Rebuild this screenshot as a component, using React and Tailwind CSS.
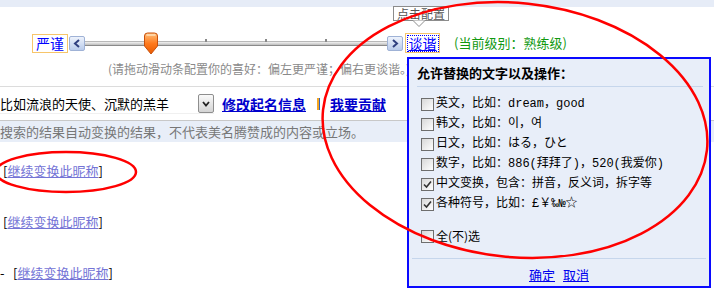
import React from "react";

const cjk = { fontFamily: '"Noto Sans CJK SC", "Noto Sans", sans-serif' };
const mono = { fontFamily: '"Liberation Mono", "Noto Sans CJK SC", monospace' };

function ArrowButton({ dir }) {
  return (
    <div className="w-[16px] h-[15px] border border-[#9fb2d6] rounded-[2px] bg-gradient-to-b from-[#eef3fc] to-[#b9cbeb] flex items-center justify-center">
      <svg width="8" height="9" viewBox="0 0 8 9">
        {dir === "left" ? (
          <path d="M6 1 L2 4.5 L6 8" fill="none" stroke="#2f3f7f" strokeWidth="2" />
        ) : (
          <path d="M2 1 L6 4.5 L2 8" fill="none" stroke="#2f3f7f" strokeWidth="2" />
        )}
      </svg>
    </div>
  );
}

function Thumb() {
  return (
    <svg width="16" height="23" viewBox="0 0 16 23">
      <defs>
        <linearGradient id="tg" x1="0" y1="0" x2="0" y2="1">
          <stop offset="0" stopColor="#ffc07a" />
          <stop offset="0.5" stopColor="#ff7a1e" />
          <stop offset="1" stopColor="#e85a00" />
        </linearGradient>
      </defs>
      <path
        d="M1.5 4 Q1.5 1 4.5 1 H11.5 Q14.5 1 14.5 4 V14 L8 22 L1.5 14 Z"
        fill="url(#tg)"
        stroke="#c9500c"
        strokeWidth="1"
      />
      <path d="M4 3 H12" stroke="#ffe0b8" strokeWidth="1.5" strokeLinecap="round" />
    </svg>
  );
}

function Checkbox({ checked }) {
  return (
    <div className="w-[13px] h-[13px] border border-[#6e6e6e] bg-gradient-to-br from-[#d8d8d8] to-[#ffffff] flex items-center justify-center shrink-0">
      {checked && (
        <svg width="9" height="9" viewBox="0 0 9 9">
          <path d="M1 4.5 L3.5 7 L8 1.5" fill="none" stroke="#333" strokeWidth="1.6" />
        </svg>
      )}
    </div>
  );
}

const items = [
  { text: "英文，比如：dream，good", checked: false },
  { text: "韩文，比如：이，여", checked: false },
  { text: "日文，比如：はる，ひと", checked: false },
  { text: "数字，比如：886(拜拜了)，520(我爱你)", checked: false },
  { text: "中文变换，包含：拼音，反义词，拆字等", checked: true },
  { text: "各种符号，比如：£￥‰№☆", checked: true },
];

function LinkLine({ dash }) {
  return (
    <div className="h-[20px] flex items-center text-[13px] text-black" style={cjk}>
      {dash && <span className="w-[10px]">-</span>}
      <span className="ml-[3px]">[</span>
      <span className="text-[#7474d6] underline">继续变换此昵称</span>
      <span>]</span>
    </div>
  );
}

export default function App() {
  return (
    <div className="relative w-[714px] h-[292px] overflow-hidden bg-white" style={cjk}>
      <div className="h-[7px] bg-[#e6ecf7]" />

      {/* slider row */}
      <div className="flex items-center mt-[26px] pl-[32px] h-[20px]">
        <div className="w-[36px] h-[19px] border border-[#f7c56a] bg-white text-[14px] leading-[17px] text-[#0000ff] flex items-center justify-center">
          严谨
        </div>
        <div className="ml-[1px]">
          <ArrowButton dir="left" />
        </div>
        <div className="relative w-[302px] h-[20px] flex items-center">
          <div className="w-full h-[5px] border-t border-[#b8b8b8] border-b border-b-[#8a8a8a] bg-gradient-to-b from-[#f2f2f2] to-[#bdbdbd]" />
          <div className="absolute left-[120px] top-[6px] w-[2px] h-[3px] bg-[#888]" />
          <div className="absolute left-[180px] top-[6px] w-[2px] h-[3px] bg-[#888]" />
          <div className="absolute left-[240px] top-[6px] w-[2px] h-[3px] bg-[#888]" />
          <div className="absolute left-[58px] top-[-1px]">
            <Thumb />
          </div>
        </div>
        <ArrowButton dir="right" />
        <div className="ml-[2px] w-[35px] h-[20px] border border-[#f7c56a] bg-white flex items-center justify-center">
          <span className="border border-dotted border-[#0000ff] text-[14px] leading-[15px] text-[#0000ff] px-[1px] underline">
            谈谐
          </span>
        </div>
        <span className="ml-[14px] text-[13px] text-[#119911]">(当前级别：熟练级)</span>
      </div>

      {/* hint */}
      <div className="pl-[108px] mt-[7px] h-[18px] text-[12px] leading-[18px] text-[#8a8a8a]">
        (请拖动滑动条配置你的喜好：偏左更严谨；偏右更谈谐。)
      </div>

      <div className="mt-[8px] h-px bg-[#dcdcdc]" />

      {/* select row */}
      <div className="flex items-center mt-[7px] h-[20px]">
        <div className="w-[214px] h-[20px] flex items-center justify-between border-b border-[#f0f0f0]">
          <span className="text-[13px] text-black leading-[20px]">比如流浪的天使、沉默的羔羊</span>
          <div className="w-[16px] h-[19px] border border-[#8e8e8e] rounded-[2px] bg-gradient-to-b from-[#fafafa] to-[#d4d4d4] flex items-center justify-center">
            <svg width="8" height="6" viewBox="0 0 8 6">
              <path d="M1 1 L4 4.5 L7 1" fill="none" stroke="#222" strokeWidth="1.8" />
            </svg>
          </div>
        </div>
        <span className="ml-[8px] text-[14px] font-bold text-[#0000cc] underline">修改起名信息</span>
        <span className="ml-[11px] flex h-[12px]">
          <span className="w-[2px] bg-[#f4a623]" />
          <span className="w-[1px] bg-[#3060c0]" />
        </span>
        <span className="ml-[10px] text-[14px] font-bold text-[#0000cc] underline">我要贡献</span>
      </div>

      {/* notice band */}
      <div className="mt-[6px] h-[22px] border-t border-[#c8c8c8] bg-[#e8eef8] text-[13px] leading-[21px] text-[#777]">
        搜索的结果自动变换的结果，不代表美名腾赞成的内容或立场。
      </div>

      <div className="mt-[19px] flex flex-col gap-[31px]">
        <LinkLine />
        <LinkLine />
        <LinkLine dash />
      </div>

      {/* tooltip */}
      <div className="absolute left-[393px] top-[6px]">
        <div className="border border-[#8c8c8c] bg-white px-[3px] h-[15px] text-[12px] leading-[13px] text-[#555]">
          点击配置
        </div>
        <svg className="absolute left-[20px] top-[14px]" width="12" height="8" viewBox="0 0 12 8">
          <path d="M0 0.5 L6 6.5 L12 0.5" fill="#fff" stroke="#8c8c8c" strokeWidth="1" />
        </svg>
      </div>

      {/* options popup */}
      <div className="absolute left-[407px] top-[57px] w-[304px] h-[231px] border-2 border-[#0a0aff] bg-[#e8eef9]">
        <div className="pl-[8px] pt-[4px] h-[24px] text-[13px] leading-[20px] font-bold text-black">
          允许替换的文字以及操作：
        </div>
        <div className="ml-[8px] mr-[6px] mt-[3px] h-px bg-[#c6d6ec]" />
        <div className="pl-[12px] pt-[7px] flex flex-col">
          {items.map((it) => (
            <div key={it.text} className="h-[20px] flex items-center gap-[2px] text-[12px] text-black" style={mono}>
              <Checkbox checked={it.checked} />
              <span>{it.text}</span>
            </div>
          ))}
          <div className="mt-[12px] h-[20px] flex items-center gap-[2px] text-[12px] text-black">
            <Checkbox />
            <span>全(不)选</span>
          </div>
        </div>
        <div className="ml-[3px] mr-[3px] mt-[12px] h-px bg-[#c6d6ec]" />
        <div className="mt-[6px] flex justify-center gap-[8px] text-[13px] text-[#0000ee]">
          <span className="underline">确定</span>
          <span className="underline">取消</span>
        </div>
      </div>

      {/* red annotation ellipses */}
      <svg className="absolute left-0 top-0 pointer-events-none" width="714" height="292">
        <ellipse cx="66" cy="172" rx="70" ry="20" fill="none" stroke="#f00" strokeWidth="2.5" />
        <ellipse
          cx="515"
          cy="130"
          rx="193"
          ry="127"
          fill="none"
          stroke="#f00"
          strokeWidth="2.5"
          transform="rotate(6 515 130)"
        />
      </svg>
    </div>
  );
}
